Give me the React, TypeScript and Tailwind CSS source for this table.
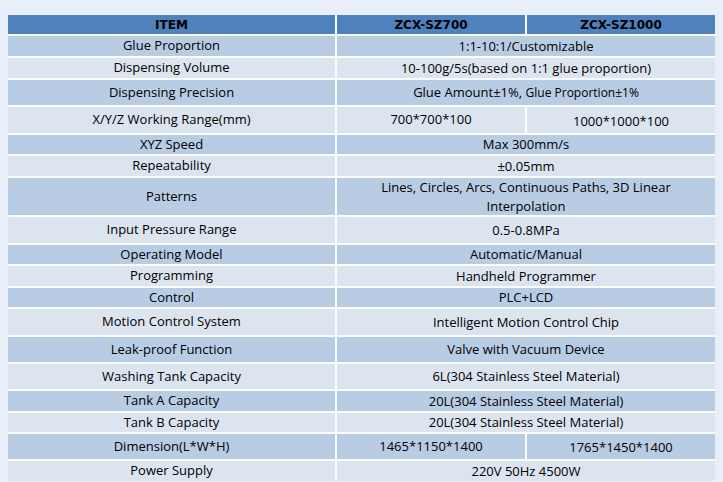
import React from 'react'

type Row = {
  label: string
  h: string
  values: React.ReactNode[]
}

const rows: Row[] = [
  { label: 'Glue Proportion', h: 'h-[20px]', values: ['1:1-10:1/Customizable'] },
  { label: 'Dispensing Volume', h: 'h-[20px]', values: ['10-100g/5s(based on 1:1 glue proportion)'] },
  {
    label: 'Dispensing Precision',
    h: 'h-[25px]',
    values: [
      <>
        Glue Amount±1%,{' '}
        <span className="text-[12px]">Glue Proportion±1%</span>
      </>,
    ],
  },
  { label: 'X/Y/Z Working Range(mm)', h: 'h-[26px]', values: ['700*700*100', '1000*1000*100'] },
  { label: 'XYZ Speed', h: 'h-[19px]', values: ['Max 300mm/s'] },
  { label: 'Repeatability', h: 'h-[20px]', values: ['±0.05mm'] },
  {
    label: 'Patterns',
    h: 'h-[37px]',
    values: [
      <>
        Lines, Circles, Arcs, Continuous Paths, 3D Linear
        <br />
        Interpolation
      </>,
    ],
  },
  { label: 'Input Pressure Range', h: 'h-[26px]', values: ['0.5-0.8MPa'] },
  { label: 'Operating Model', h: 'h-[19px]', values: ['Automatic/Manual'] },
  { label: 'Programming', h: 'h-[20px]', values: ['Handheld Programmer'] },
  { label: 'Control', h: 'h-[19px]', values: ['PLC+LCD'] },
  { label: 'Motion Control System', h: 'h-[26px]', values: ['Intelligent Motion Control Chip'] },
  { label: 'Leak-proof Function', h: 'h-[25px]', values: ['Valve with Vacuum Device'] },
  { label: 'Washing Tank Capacity', h: 'h-[25px]', values: ['6L(304 Stainless Steel Material)'] },
  { label: 'Tank A Capacity', h: 'h-[20px]', values: ['20L(304 Stainless Steel Material)'] },
  { label: 'Tank B Capacity', h: 'h-[19px]', values: ['20L(304 Stainless Steel Material)'] },
  { label: 'Dimension(L*W*H)', h: 'h-[25px]', values: ['1465*1150*1400', '1765*1450*1400'] },
  { label: 'Power Supply', h: 'h-[20px]', values: ['220V 50Hz 4500W'] },
]

function Cell({ children, className = '' }: { children: React.ReactNode; className?: string }) {
  return (
    <div className={`flex items-center justify-center text-center ${className}`}>
      <span>{children}</span>
    </div>
  )
}

export default function App() {
  return (
    <div className="min-h-screen w-full overflow-hidden bg-[#e9eff9] pl-[8px] pt-[15px] font-['Open_Sans',sans-serif] text-[13px] text-black">
      <div className="grid w-[707px] grid-cols-[327px_188px_188px] gap-[2px] bg-[#fbfcfe]">
        {/* header */}
        <Cell className="h-[19px] bg-[#4f81bd] font-['DejaVu_Sans',sans-serif] text-[12px] font-bold text-black">ITEM</Cell>
        <Cell className="h-[19px] bg-[#4f81bd] font-['DejaVu_Sans',sans-serif] text-[12px] font-bold text-black">ZCX-SZ700</Cell>
        <Cell className="h-[19px] bg-[#4f81bd] font-['DejaVu_Sans',sans-serif] text-[12px] font-bold text-black">ZCX-SZ1000</Cell>

        {rows.map((r, i) => {
          const bg = i % 2 === 0 ? 'bg-[#b8cce4]' : 'bg-[#dce4f0]'
          return (
            <React.Fragment key={r.label}>
              <Cell className={`${r.h} ${bg}`}>{r.label}</Cell>
              {r.values.length === 1 ? (
                <Cell className={`${r.h} ${bg} col-span-2 leading-[19px]`}>{r.values[0]}</Cell>
              ) : (
                <>
                  <Cell className={`${r.h} ${bg}`}>{r.values[0]}</Cell>
                  <Cell className={`${r.h} ${bg} pt-[3px]`}>{r.values[1]}</Cell>
                </>
              )}
            </React.Fragment>
          )
        })}
      </div>
    </div>
  )
}
